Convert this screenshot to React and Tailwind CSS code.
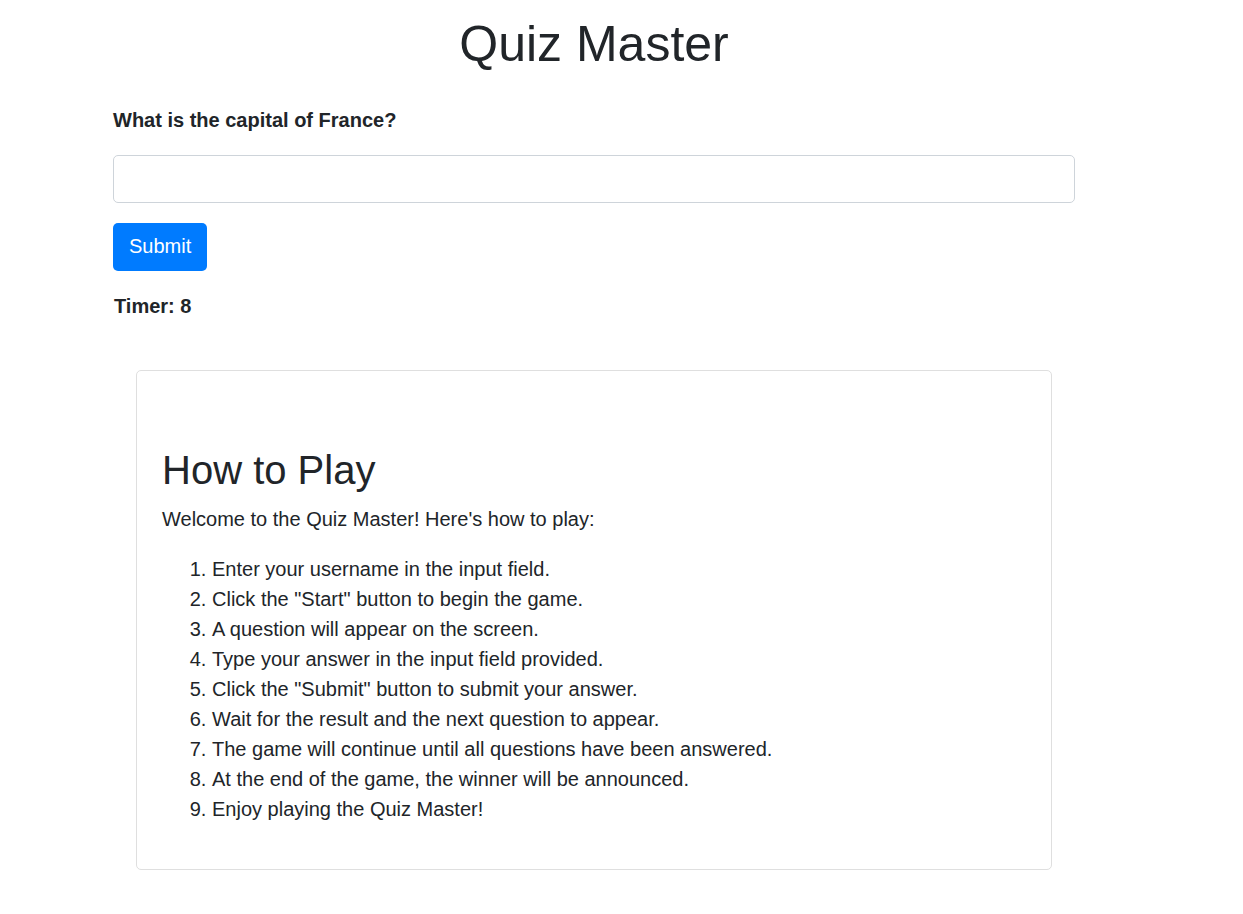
import React, { useState } from 'react';

const steps = [
  'Enter your username in the input field.',
  'Click the "Start" button to begin the game.',
  'A question will appear on the screen.',
  'Type your answer in the input field provided.',
  'Click the "Submit" button to submit your answer.',
  'Wait for the result and the next question to appear.',
  'The game will continue until all questions have been answered.',
  'At the end of the game, the winner will be announced.',
  'Enjoy playing the Quiz Master!',
];

function App() {
  const [answer, setAnswer] = useState(''); // current answer text

  return (
    <div className="min-h-screen bg-white text-[#212529] font-['Liberation_Sans',Arial,sans-serif]">
      <div className="ml-[113px] w-[962px]">
        <h1 className="mt-[14px] text-center text-[50px] leading-[1.2] font-normal">Quiz Master</h1>

        <h5 className="mt-[34px] text-[20px] leading-[1.2] font-bold">What is the capital of France?</h5>

        <input
          className="mt-[23px] block w-full h-[48px] px-4 text-[20px] border border-[#ced4da] rounded-[5px] outline-none focus:border-[#80bdff]"
          value={answer}
          onChange={(e) => setAnswer(e.target.value)}
        />

        <button className="mt-[20px] h-[48px] px-4 pb-[2px] bg-[#007bff] text-white text-[20px] leading-[1.5] rounded-[5px] hover:bg-[#0069d9]">
          Submit
        </button>

        <p className="mt-[23px] ml-px text-[20px] leading-[1.2] font-bold">Timer: 8</p>

        {/* how to play card */}
        <div className="mt-[52px] mx-[23px] border border-[#dfdfdf] rounded-[5px] pt-[75px] px-[25px] pb-[45px]">
          <h2 className="text-[40px] leading-[1.2] font-normal">How to Play</h2>
          <p className="mt-[10px] text-[20px] leading-[1.5]">Welcome to the Quiz Master! Here's how to play:</p>
          <ol className="mt-[20px] list-decimal pl-[50px] text-[20px] leading-[1.5]">
            {steps.map((s) => (
              <li key={s}>{s}</li>
            ))}
          </ol>
        </div>
      </div>
    </div>
  );
}

export default App;
